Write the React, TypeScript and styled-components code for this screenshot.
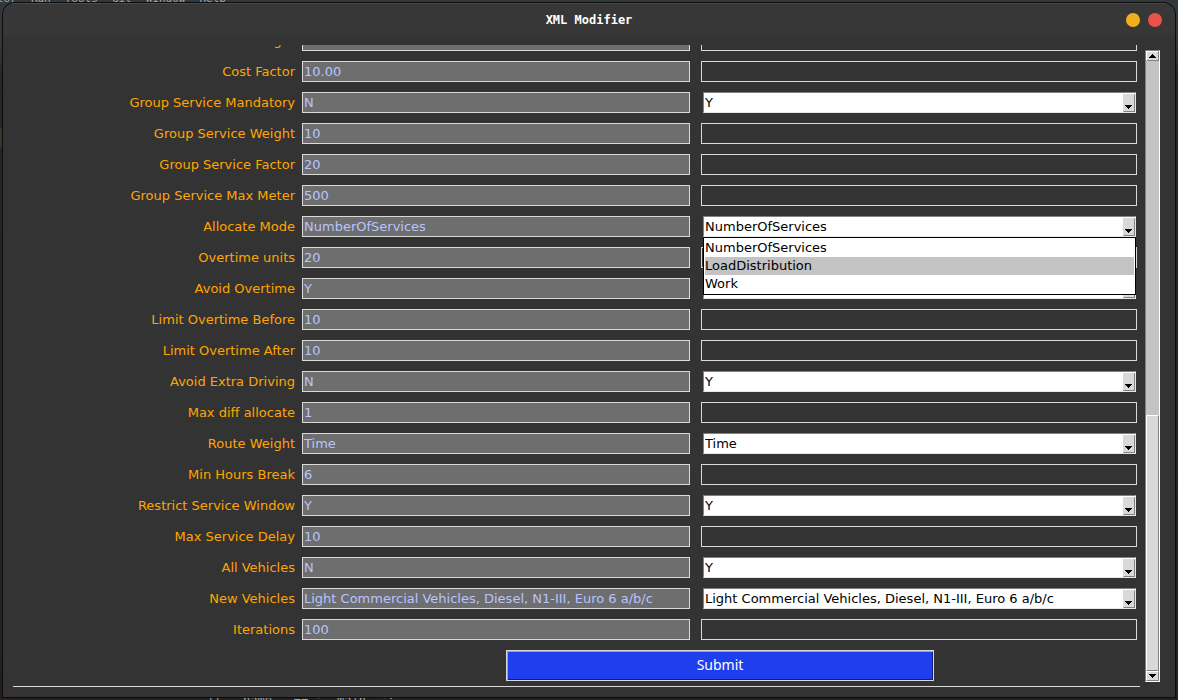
import React from "react";
import styled, { createGlobalStyle } from "styled-components";

const Global = createGlobalStyle`
  * { box-sizing: border-box; }
  html, body { margin: 0; padding: 0; }
  body { background: #242423; font-family: "DejaVu Sans", sans-serif; font-size: 13px; }
`;

const Desktop = styled.div`
  position: relative;
  height: 100vh;
  min-height: 400px;
  padding: 3px;
  overflow: hidden;
  background:
    linear-gradient(#3a352b, #3a352b) 0 128px / 2px 20px no-repeat,
    linear-gradient(#30383b 0, #30383b 40px, #2b3033 60px, #262626 70px, #242021 100%);
`;

const EditorText = styled.div<{ $bottom?: boolean }>`
  position: absolute;
  left: ${(p) => (p.$bottom ? "207px" : "-3px")};
  ${(p) => (p.$bottom ? "bottom: -8px;" : "top: -9px;")}
  display: flex;
  gap: 14px;
  font: ${(p) => (p.$bottom ? "12px" : "11px")}/16px "DejaVu Sans Mono", monospace;
  color: #a4a7a8;
  white-space: pre;
`;

const Window = styled.section`
  position: relative;
  display: flex;
  flex-direction: column;
  height: 100%;
  background: #333333;
  border-radius: 12px 12px 0 0;
  box-shadow: 0 0 0 1px #0b0c0c;
  overflow: hidden;
`;

const TitleBar = styled.header`
  display: grid;
  grid-template-columns: 1fr auto 1fr;
  align-items: center;
  flex: none;
  height: 32px;
  padding: 0 13px;
  border-top: 1px solid #4a4a4a;
  background: #373737;
`;

const Title = styled.h1`
  grid-column: 2;
  margin: 0;
  font: bold 12px/16px "DejaVu Sans Mono", monospace;
  color: #ffffff;
`;

const WindowButtons = styled.div`
  display: flex;
  justify-content: flex-end;
  gap: 8px;
`;

const WindowButton = styled.button<{ $color: string }>`
  width: 14px;
  height: 14px;
  padding: 0;
  border: 0;
  border-radius: 50%;
  background: ${(p) => p.$color};
`;

const Body = styled.div`
  display: flex;
  flex: 1;
  min-height: 0;
  gap: 5px;
  padding: 10px 15px 10px 10px;
`;

const Viewport = styled.form`
  display: flex;
  flex: 1;
  flex-direction: column;
  justify-content: flex-end;
  min-width: 0;
  overflow: hidden;
  border-bottom: 1px solid #d9d9d9;
`;

const Row = styled.div`
  display: grid;
  grid-template-columns: 289px minmax(0, 388fr) minmax(0, 447fr);
  flex: none;
  height: 21px;
  margin-bottom: 10px;
  padding-right: 3px;
`;

const Label = styled.label`
  padding-right: 7px;
  text-align: right;
  line-height: 21px;
  color: #ffa500;
  white-space: nowrap;
`;

const Current = styled.input`
  width: 100%;
  height: 21px;
  padding: 0 1px 1px;
  border: 1px solid #d9d9d9;
  border-radius: 0;
  outline: 0;
  background: #6e6e6e;
  color: #b8c4ff;
  font: inherit;
`;

const Cell = styled.div`
  position: relative;
  margin-left: 11px;
`;

const Entry = styled(Current)`
  display: block;
  background: #333333;
  color: #ffffff;
`;

const Combo = styled.div`
  position: relative;
  display: flex;
  height: 21px;
  margin: 0 1px 0 2px;
  border: 1px solid;
  border-color: #828282 #e8e8e8 #e8e8e8 #828282;
  background: #ffffff;
`;

const Choice = styled.select`
  flex: 1;
  min-width: 0;
  height: 18px;
  padding: 0 1px;
  border: 0;
  outline: 0;
  appearance: none;
  background: #ffffff;
  color: #000000;
  font: inherit;
`;

const ComboArrow = styled.span`
  display: flex;
  align-items: flex-end;
  width: 12px;
  height: 18px;
  margin-top: 1px;
  padding: 0 0 2px 1px;
  border: 1px solid;
  border-color: #d9d9d9 #828282 #828282 #d9d9d9;
  background: #d9d9d9;
  pointer-events: none;
`;

const Menu = styled.ul`
  position: absolute;
  z-index: 1;
  top: 21px;
  left: 2px;
  right: 1px;
  margin: 0;
  padding: 1px;
  border: 1px solid #000000;
  background: #ffffff;
  color: #000000;
  list-style: none;
`;

const Option = styled.li<{ $active?: boolean }>`
  height: 18px;
  line-height: 17px;
  background: ${(p) => (p.$active ? "#c3c3c3" : "#ffffff")};
`;

const SubmitRow = styled.div`
  display: flex;
  flex: none;
  justify-content: center;
  padding: 0 0 5px 287px;
`;

const Submit = styled.button`
  width: 51%;
  height: 31px;
  padding: 0 0 2px;
  border: 1px solid #d9d9d9;
  border-radius: 0;
  background: #1f3fef;
  box-shadow: inset 1px 1px #8c9cf5, inset -1px -1px #10207a;
  color: #ffffff;
  font: 14px/18px "Noto Sans", sans-serif;
`;

const Scrollbar = styled.div`
  display: flex;
  flex: none;
  flex-direction: column;
  width: 15px;
  margin: 5px 0 5px;
  border: 1px solid;
  border-color: #828282 #ffffff #ffffff #828282;
  background: #c3c3c3;
`;

const ScrollButton = styled.button`
  display: flex;
  flex: none;
  align-items: center;
  justify-content: center;
  height: 10px;
  padding: 0;
  border: 1px solid;
  border-color: #ffffff #828282 #828282 #ffffff;
  background: #d9d9d9;
`;

const Track = styled.div`
  display: flex;
  flex: 1;
  align-items: flex-end;
`;

const Thumb = styled.div`
  width: 100%;
  height: 42%;
  border: 1px solid;
  border-color: #ffffff #828282 #828282 #ffffff;
  background: #d9d9d9;
`;

const Arrow = ({ up }: { up?: boolean }) => (
  <svg width="7" height="4" viewBox="0 0 7 4" shapeRendering="crispEdges" aria-hidden="true">
    <path d={up ? "M3 0h1v1h1v1h1v1h1v1H0V3h1V2h1V1h1z" : "M0 0h7v1H6v1H5v1H4v1H3V3H2V2H1V1H0z"} />
  </svg>
);

type Field = { label: string; current: string; choice?: string; options?: string[] };

const fields: Field[] = [
  { label: "Cost Weight", current: "" },
  { label: "Cost Factor", current: "10.00" },
  { label: "Group Service Mandatory", current: "N", choice: "Y" },
  { label: "Group Service Weight", current: "10" },
  { label: "Group Service Factor", current: "20" },
  { label: "Group Service Max Meter", current: "500" },
  {
    label: "Allocate Mode",
    current: "NumberOfServices",
    choice: "NumberOfServices",
    options: ["NumberOfServices", "LoadDistribution", "Work"],
  },
  { label: "Overtime units", current: "20" },
  { label: "Avoid Overtime", current: "Y", choice: "Y" },
  { label: "Limit Overtime Before", current: "10" },
  { label: "Limit Overtime After", current: "10" },
  { label: "Avoid Extra Driving", current: "N", choice: "Y" },
  { label: "Max diff allocate", current: "1" },
  { label: "Route Weight", current: "Time", choice: "Time" },
  { label: "Min Hours Break", current: "6" },
  { label: "Restrict Service Window", current: "Y", choice: "Y" },
  { label: "Max Service Delay", current: "10" },
  { label: "All Vehicles", current: "N", choice: "Y" },
  {
    label: "New Vehicles",
    current: "Light Commercial Vehicles, Diesel, N1-III, Euro 6 a/b/c",
    choice: "Light Commercial Vehicles, Diesel, N1-III, Euro 6 a/b/c",
  },
  { label: "Iterations", current: "100" },
];

function FieldRow({ label, current, choice, options }: Field) {
  const id = label.toLowerCase().replace(/ /g, "-");
  return (
    <Row>
      <Label htmlFor={id}>{label}</Label>
      <Current value={current} readOnly aria-label={`${label}, current value`} />
      <Cell>
        {choice ? (
          <Combo>
            <Choice id={id} defaultValue={choice}>
              {(options ?? [choice]).map((o) => (
                <option key={o}>{o}</option>
              ))}
            </Choice>
            <ComboArrow>
              <Arrow />
            </ComboArrow>
          </Combo>
        ) : (
          <Entry id={id} />
        )}
        {options && (
          <Menu role="listbox" aria-label={label}>
            {options.map((o) => (
              <Option key={o} role="option" aria-selected={o === "LoadDistribution"} $active={o === "LoadDistribution"}>
                {o}
              </Option>
            ))}
          </Menu>
        )}
      </Cell>
    </Row>
  );
}

export default function App() {
  return (
    <>
      <Global />
      <Desktop>
        <EditorText>
          {["tor", "Run", "Tools", "Git", "Window", "Help"].map((m) => (
            <span key={m}>{m}</span>
          ))}
        </EditorText>
        <EditorText $bottom>if __name__ == '__main__':</EditorText>
        <Window>
          <TitleBar>
            <Title>XML Modifier</Title>
            <WindowButtons>
              <WindowButton type="button" $color="#f2af1c" aria-label="Minimize" />
              <WindowButton type="button" $color="#ea5148" aria-label="Close" />
            </WindowButtons>
          </TitleBar>
          <Body>
            <Viewport onSubmit={(e) => e.preventDefault()}>
              {fields.map((f) => (
                <FieldRow key={f.label} {...f} />
              ))}
              <SubmitRow>
                <Submit type="submit">Submit</Submit>
              </SubmitRow>
            </Viewport>
            <Scrollbar>
              <ScrollButton type="button" aria-label="Scroll up">
                <Arrow up />
              </ScrollButton>
              <Track>
                <Thumb />
              </Track>
              <ScrollButton type="button" aria-label="Scroll down">
                <Arrow />
              </ScrollButton>
            </Scrollbar>
          </Body>
        </Window>
      </Desktop>
    </>
  );
}
